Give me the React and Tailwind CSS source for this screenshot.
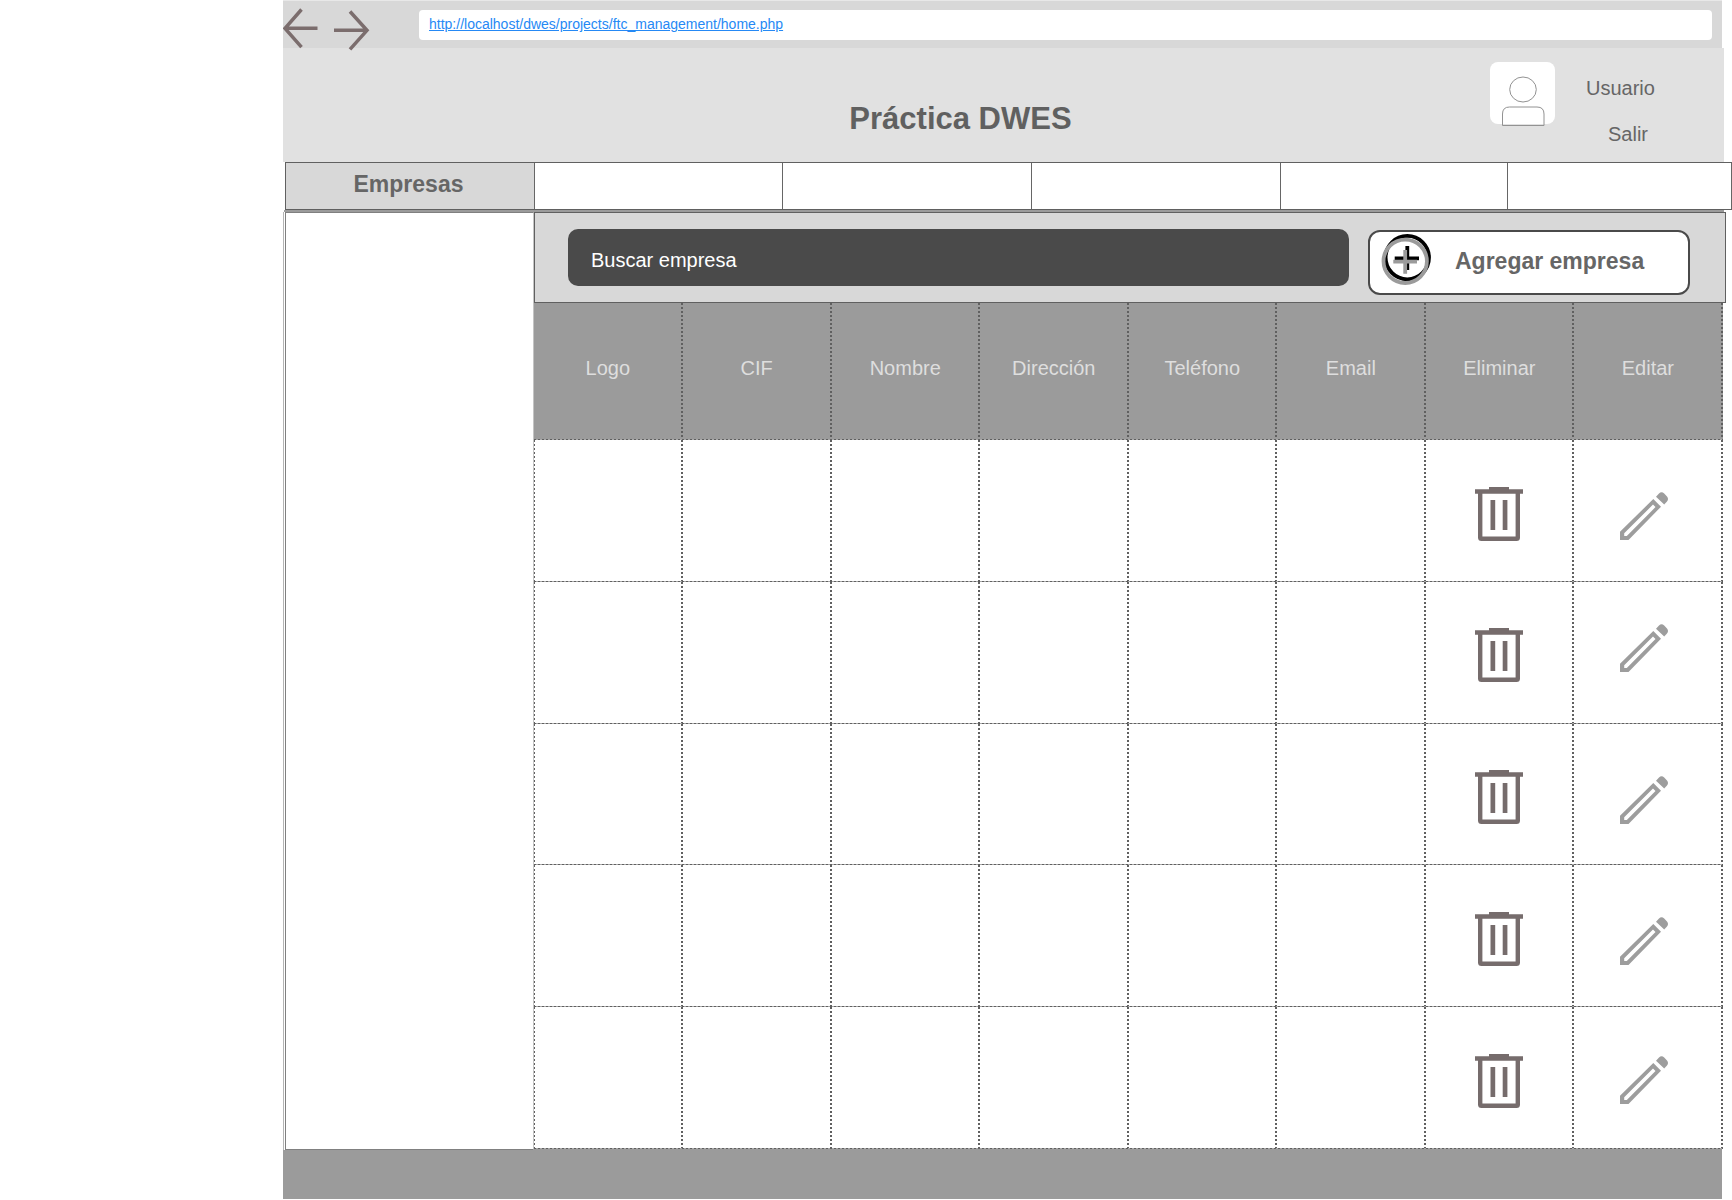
import React from "react";

const columns = ["Logo", "CIF", "Nombre", "Dirección", "Teléfono", "Email", "Eliminar", "Editar"];
const pencilOffsets = ["pt-[52px]", "pt-[42px]", "pt-[52px]", "pt-[52px]", "pt-[49px]"];
const vDots = "bg-[repeating-linear-gradient(to_bottom,#606060_0_2px,transparent_2px_4px)]";
const hDots = "bg-[repeating-linear-gradient(to_right,#606060_0_2px,#a8a8a8_2px_4px)]";

function Trash() {
  return (
    <svg width="48" height="54" viewBox="0 0 48 54" fill="#766c6c">
      <path d="M14 0h20v2.300h14v4.500H0V2.300h14z" />
      <path d="M3 6v44.500q0 3.500 3.500 3.500h35q3.500 0 3.500-3.500V6h-4.400v43.500h-33.200V6z" />
      <path d="M15.500 13h4.700v30h-4.700zM27.700 13h4.700v30h-4.700z" />
    </svg>
  );
}

function Pencil() {
  return (
    <svg width="48" height="48" viewBox="0 0 48 48" fill="#9d9d9d">
      <path fillRule="evenodd" d="M33.300 7L41 14.700L8.500 48H0V39.800ZM33 12.600L4.200 41.300V44H6.800L35.500 15.100Z" />
      <path d="M36 4.700L39 1.600Q41.500-1 44.200 1.600L47 4.400Q49 7 47 9.500L44.200 12.500Z" />
    </svg>
  );
}

export default function App() {
  return (
    <div className="h-[1200px] w-[1732px] overflow-hidden bg-white pl-[283px] font-['Liberation_Sans',Arial,sans-serif] text-[#666]">
      <div className="h-px w-[1439px] bg-[#e8e8e8]" />
      <div className="flex h-[47px] w-[1439px] bg-[#d8d8d8]">
        <svg className="relative shrink-0" width="136" height="50" viewBox="0 0 136 50" fill="none" stroke="#7b6d6d" strokeWidth="3.500">
          <path d="M34.500 27.300H2M18.500 8.500L2 27.300L18.500 46.200M51 29.300H83M67 10.500L84 29.300L67 48.300" />
        </svg>
        <div className="mt-[9px] h-[30px] w-[1293px] rounded bg-white pl-[10px] text-[14px] leading-[28px] text-[#2589f5]">
          <a className="whitespace-nowrap underline">http://localhost/dwes/projects/ftc_management/home.php</a>
        </div>
      </div>
      <header className="flex h-[114px] w-[1441px] bg-[#e1e1e1]">
        <h1 className="ml-[377.500px] mt-[50px] w-[600px] text-center text-[31px] font-bold leading-[42px] text-[#606060]">Práctica DWES</h1>
        <div className="ml-[229.500px] mt-[14px] h-[62px] w-[65px] rounded-lg bg-white">
          <svg width="65" height="66" viewBox="0 0 65 66" fill="none" stroke="#929292" strokeWidth="1">
            <ellipse cx="33" cy="27.500" rx="13.300" ry="12.500" />
            <path d="M12.500 63.500V52q0-7 7-7H47q7 0 7 7v11.500z" />
          </svg>
        </div>
        <div className="ml-[31px] mt-[28px] text-[20px] leading-6">
          <p>Usuario</p>
          <p className="ml-[22px] mt-[22px]">Salir</p>
        </div>
      </header>
      <nav className="ml-[2px] grid h-[48px] w-[1447px] grid-cols-[249px_248px_249px_249px_227px_224px] border-y border-l border-[#606060] bg-white">
        <div className="border-r border-[#666] bg-[#d8d8d8] pr-[3px] text-center text-[23px] font-bold leading-[43px]">Empresas</div>
        <div className="border-r border-[#666]" />
        <div className="border-r border-[#666]" />
        <div className="border-r border-[#666]" />
        <div className="border-r border-[#666]" />
        <div className="border-r border-[#666]" />
      </nav>
      <div className="ml-px h-[2px] w-[1440px] bg-[#9b9b9b]" />
      <main className="flex h-[938px] border-l border-[#b5b5b5]">
        <aside className="ml-px w-[249px] border border-[#808080] border-r-[#c4c4c4] bg-white" />
        <section className="w-[1192px]">
          <div className="flex h-[91px] w-[1192px] border border-[#606060] bg-[#d8d8d8]">
            <div className="ml-[33px] mt-[16px] h-[57px] w-[781px] rounded-[10px] bg-[#4a4a4a] pl-[23px] text-[20px] leading-[62px] text-white">Buscar empresa</div>
            <button className="ml-[19px] mt-[17px] flex h-[65px] w-[322px] rounded-xl border-2 border-[#4a4a4a] bg-white">
              <svg className="ml-[11px] mt-[2px] shrink-0" width="51" height="54" viewBox="0 0 51 54" fill="none" strokeWidth="3.800">
                <path d="M26.300 12v24M13.700 24.300H38" stroke="#000" />
                <circle cx="26.300" cy="23.600" r="21.700" stroke="#000" />
                <path d="M24.200 16v23.700M12.300 27.700H36" stroke="#9b9b9b" />
                <circle cx="24.200" cy="27.300" r="21.700" stroke="#9b9b9b" />
              </svg>
              <span className="ml-[23px] text-[23px] font-bold leading-[58px]">Agregar empresa</span>
            </button>
          </div>
          <div className="flex h-[136px] w-[1189px] bg-[#9b9b9b]">
            {columns.map((c, i) => (
              <div key={c} className={i === 0 ? "flex w-[149.200px]" : "flex w-[148.540px]"}>
                <div className="flex-1 pl-[0.500px] text-center text-[20px] leading-[131px] text-[#dedede]">{c}</div>
                <div className={"w-[2px] " + vDots} />
              </div>
            ))}
          </div>
          {pencilOffsets.map((offset, row) => (
            <div key={row} className="h-[141.800px] w-[1189px]">
              <div className={"h-px " + hDots} />
              <div className="flex h-[140.800px]">
                <div className={"w-px " + vDots} />
                {columns.map((c, i) => (
                  <div key={c} className={i === 0 ? "flex w-[148.200px]" : "flex w-[148.540px]"}>
                    <div className="min-w-0 flex-1">
                      {i === 6 && <div className="pl-[49px] pt-[46.500px]"><Trash /></div>}
                      {i === 7 && <div className={"pl-[46px] " + offset}><Pencil /></div>}
                    </div>
                    <div className={"w-[2px] " + vDots} />
                  </div>
                ))}
              </div>
            </div>
          ))}
          <div className={"h-px w-[1189px] " + hDots} />
          <div className="h-px w-[1188px] bg-[#9b9b9b]" />
        </section>
      </main>
      <footer className="h-[49px] w-[1439px] bg-[#9b9b9b]" />
    </div>
  );
}
